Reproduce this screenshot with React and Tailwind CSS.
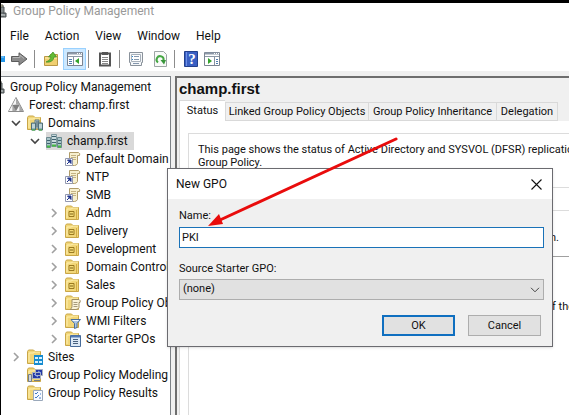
import React from "react";

const UI = "font-['Roboto','Noto_Sans',sans-serif]";

function FolderBase() {
  return (
    <>
      <path d="M.5 14.5V2.5L1.5 1h5l1.5 1.5h5.5v12z" fill="#f1d678" stroke="#c9a647" />
      <path d="M2 13V4h4l2-1h5" fill="none" stroke="#fff0b0" />
    </>
  );
}

function Buildings() {
  return (
    <g transform="translate(4 4)">
      <path d="M4 1h4v8H4z" fill="#b9cbd1" stroke="#607c86" />
      <path d="M5 3h3M5 5h3M5 7h3" stroke="#36535e" />
      <path d="M.5 4h4v7h-4zM7.500 4h4v7h-4z" fill="#91b0b8" stroke="#506f79" />
      <path d="M1 6h3M1 8h3M8 6h3M8 8h3" stroke="#e8f4f4" />
      <path d="M1 11h3M8 11h3" stroke="#43b53c" />
    </g>
  );
}

function TreeIcon({ type }) {
  return (
    <svg width="16" height="16" viewBox="0 0 16 16" className="shrink-0" aria-hidden="true">
      {type === "root" && (
        <>
          <path d="M4 2h8v7H4z" fill="#ddd6ad" stroke="#66655a" />
          <path d="M10 4h3v9h-3M5 10h10v4H5z" fill="#858b8c" stroke="#4d5355" />
          <path d="M9 12h5" stroke="#dfe5e6" />
        </>
      )}
      {type === "forest" && (
        <>
          <path d="M8 .5L15.500 14.500H.5z" fill="#c8c8c8" stroke="#8a8a8a" />
          <path d="M8 1v6l-3.500 1zM4.500 8v6L1 14zM11.500 8v6l-3.500 0z" fill="#f6f6f6" />
          <path d="M8 1l3.500 7L8 7.500zM4.500 8L8 14H4.500zM11.500 8L15 14h-3.500z" fill="#a9a9a9" />
          <path d="M4.500 8h7L8 14z" fill="#7e7e7e" />
        </>
      )}
      {type === "domains" && (
        <>
          <FolderBase />
          <Buildings />
        </>
      )}
      {type === "domain" && (
        <>
          <path d="M5.500 1.500h5v12h-5z" fill="#c9d9dc" stroke="#7f999f" />
          <path d="M.5 4.500h4v10h-4zM11.500 4.500h4v10h-4z" fill="#a9c5c9" stroke="#6d8b91" />
          <path d="M6 3.500h4M6 6.500h4M6 9.500h4M1 7.500h3M1 10.500h3M12 7.500h3M12 10.500h3" stroke="#3f6470" />
          <path d="M1 13.500h3M6 12.500h4M12 13.500h3" stroke="#47b944" strokeWidth="2" />
        </>
      )}
      {type === "link" && (
        <>
          <path d="M4.500 1.500h9q2 1 1 3h-2v8q-1 2-3 2H3q2-1 1.500-3z" fill="#f7f0cf" stroke="#b09c69" />
          <path d="M6 4.500h5M6 6.500h5M7 8.500h4" stroke="#c4b384" />
          <path d="M.5 7.500h7v7h-7z" fill="#fff" stroke="#9298b0" />
          <path d="M2 13l3-3M2.500 9h3.500v3.500z" fill="#20348d" stroke="#20348d" />
        </>
      )}
      {type === "ou" && (
        <>
          <FolderBase />
          <path d="M4 6.500h5v5H4z" fill="#f5db76" stroke="#9b7a21" />
          <path d="M5 9h3" stroke="#7d631b" />
          <path d="M11.500 5v9" stroke="#d3ad45" />
        </>
      )}
      {type === "objects" && (
        <>
          <FolderBase />
          <path d="M7 4.500h7q2 1 1 3h-1v5q-1 2-3 2H5q2-1 2-3z" fill="#faf3d8" stroke="#9e8e65" />
          <path d="M8.500 7.500h4M8.500 9.500h4M8.500 11.500h4" stroke="#a69b7d" />
        </>
      )}
      {type === "filter" && (
        <>
          <FolderBase />
          <path d="M6 6.500h9.500l-3.500 4v4l-2.500 1v-5z" fill="#a9c5e5" stroke="#486e9c" />
          <path d="M7.500 7.500h6" stroke="#f4f9ff" />
        </>
      )}
      {type === "starter" && (
        <>
          <FolderBase />
          <path d="M5.500 4.500h10v11h-10z" fill="#dce9f6" stroke="#476b99" />
          <path d="M6 5.500h9" stroke="#5179b4" strokeWidth="2" />
          <path d="M8 8.500h5M8 10.500h5M8 12.500h5" stroke="#48617e" />
        </>
      )}
      {type === "sites" && (
        <>
          <FolderBase />
          <path d="M7 6h9v10H7z" fill="#168bcf" />
          <path d="M8 8h3v2H8zM12 8h3v2h-3zM8 12h3v2H8zM12 12h3v2h-3z" fill="#d5f1ff" />
        </>
      )}
      {type === "modeling" && (
        <>
          <FolderBase />
          <path d="M8.500 2.500h7v6h-7zM5.500 5.500h8v6h-8z" fill="#263aa4" stroke="#a9b2c1" />
          <path d="M7 13.500h6M1.500 7.500h3v7h-3z" fill="#d0d5da" stroke="#737e8b" />
          <path d="M7 7l4 3M11 4l3 2" stroke="#85a5f5" />
        </>
      )}
      {type === "results" && (
        <>
          <FolderBase />
          <path d="M6.500 5.500h9v10h-9z" fill="#f7faff" stroke="#9aa8ba" />
          <path d="M8 8l1 1 2-2M8 12l1 1 3-3M13 9h1M12 13h2" fill="none" stroke="#427ac4" />
        </>
      )}
    </svg>
  );
}

function Expander({ state }) {
  return (
    <svg width="10" height="10" viewBox="0 0 10 10" className="shrink-0" aria-hidden="true">
      {state === "open" && <path d="M1 3l4 4 4-4" fill="none" stroke="#444" strokeWidth="1.6" />}
      {state === "closed" && <path d="M3 1l4 4-4 4" fill="none" stroke="#a0a0a0" strokeWidth="1.6" />}
    </svg>
  );
}

const tree = [
  ["Forest: champ.first", "forest", "pl-[7px]", "none"],
  ["Domains", "domains", "pl-[26px]", "open"],
  ["champ.first", "domain", "pl-[45px]", "open"],
  ["Default Domain", "link", "pl-[64px]", ""],
  ["NTP", "link", "pl-[64px]", ""],
  ["SMB", "link", "pl-[64px]", ""],
  ["Adm", "ou", "pl-[64px]", "closed"],
  ["Delivery", "ou", "pl-[64px]", "closed"],
  ["Development", "ou", "pl-[64px]", "closed"],
  ["Domain Controllers", "ou", "pl-[64px]", "closed"],
  ["Sales", "ou", "pl-[64px]", "closed"],
  ["Group Policy Objects", "objects", "pl-[64px]", "closed"],
  ["WMI Filters", "filter", "pl-[64px]", "closed"],
  ["Starter GPOs", "starter", "pl-[64px]", "closed"],
  ["Sites", "sites", "pl-[26px]", "closed"],
  ["Group Policy Modeling", "modeling", "pl-[26px]", ""],
  ["Group Policy Results", "results", "pl-[26px]", ""],
];

function TreeRow({ label, icon, indent, state }) {
  const selected = label === "champ.first";
  return (
    <li className={`flex h-[18px] items-center ${indent}`}>
      {state !== "none" && (
        <span className="-ml-4 w-4 shrink-0">
          <Expander state={state} />
        </span>
      )}
      <span className={`flex h-[18px] items-center gap-[5px] pr-1.5 ${selected ? "bg-[#d9d9d9]" : ""}`}>
        <TreeIcon type={icon} />
        {label}
      </span>
    </li>
  );
}

function Separator() {
  return <span className="h-[18px] w-px shrink-0 bg-[#8c8c8c]" />;
}

function ToolButton({ label, children, className = "" }) {
  return (
    <button type="button" aria-label={label} className={`flex h-[22px] shrink-0 items-center justify-center ${className}`}>
      {children}
    </button>
  );
}

function PaneIcon({ flipped }) {
  return (
    <svg width="16" height="14" viewBox="0 0 16 14" aria-hidden="true">
      <path d="M.5.5h15v13H.5z" fill="#fff" stroke="#7b8491" />
      <path d="M1 1.500h14" stroke="#8d99a8" strokeWidth="2" />
      <path d="M10 1.500h1M12 1.500h1M14 1.500h1" stroke="#fff" />
      <path d="M1 4.500h14" stroke="#8c98a6" />
      {flipped ? (
        <>
          <path d="M10.500 5v8" stroke="#8792a1" />
          <path d="M4 6l4 3-4 3z" fill="#34a32c" />
          <path d="M12 7.500h2M12 9.500h2M12 11.500h2" stroke="#4f7daf" />
        </>
      ) : (
        <>
          <path d="M6.500 5v8" stroke="#8792a1" />
          <path d="M12 6L8 9l4 3z" fill="#34a32c" />
          <path d="M2 7.500h3M2 9.500h3M2 11.500h3" stroke="#4f7daf" />
        </>
      )}
    </svg>
  );
}

function Toolbar() {
  return (
    <div className="flex h-6 items-center overflow-hidden pb-px">
      <ToolButton label="Back" className="w-1">
        <svg width="4" height="8" viewBox="0 0 4 8"><path d="M0 1h4v6H0z" fill="#2496e8" /><path d="M0 2h3" stroke="#93d1ff" /></svg>
      </ToolButton>
      <ToolButton label="Forward" className="mr-1.5 ml-1.5 w-[17px]">
        <svg width="17" height="14" viewBox="0 0 17 14">
          <path d="M.5 4.500H8V.8L16 7l-8 6.200V9.500H.5z" fill="#8b8b8b" stroke="#5c5c5c" />
          <path d="M2 5.500h7V3l4 3.500" fill="none" stroke="#b5b5b5" />
        </svg>
      </ToolButton>
      <Separator />
      <ToolButton label="Up one level" className="mr-1 ml-2 w-4">
        <svg width="16" height="16" viewBox="0 0 16 16">
          <path d="M1.500 14.500v-9h5l1-2h7v11z" fill="#f0cf70" stroke="#b99745" />
          <path d="M2 7h12" stroke="#fff0b0" />
          <path d="M3 11q4-1 5-5H5.500l4.500-5 3.500 5H11q-1 6-8 5z" fill="#62bb35" stroke="#398b23" strokeWidth=".7" />
        </svg>
      </ToolButton>
      <ToolButton label="Show console tree" className="mr-0.5 w-[23px] border border-[#99d1ff] bg-[#cce8ff]">
        <PaneIcon />
      </ToolButton>
      <Separator />
      <ToolButton label="Delete" className="mr-1.5 ml-2 w-4">
        <svg width="14" height="16" viewBox="0 0 14 16">
          <path d="M2 2.500h10v12H2z" fill="#fff" stroke="#555" strokeWidth="2" />
          <path d="M4 1h6v3H4z" fill="#555" />
          <path d="M4 6.500h6M4 8.500h6M4 10.500h6M4 12.500h6" stroke="#888" />
        </svg>
      </ToolButton>
      <Separator />
      <ToolButton label="Properties" className="ml-2 w-4">
        <svg width="16" height="16" viewBox="0 0 16 16">
          <path d="M1.500 1.500h13v10h-1v3h-11v-3h-1z" fill="#f5f7f9" stroke="#8a929b" />
          <path d="M3.500 3.500h9v7h-9z" fill="#fff" stroke="#a7b0ba" />
          <path d="M6 5.500h5M6 8.500h5M5 12.500h6" stroke="#8497ad" />
          <path d="M4 5.500h1M4 8.500h1" stroke="#2787cf" />
        </svg>
      </ToolButton>
      <ToolButton label="Refresh" className="mr-1.5 ml-2 w-4">
        <svg width="15" height="16" viewBox="0 0 15 16">
          <path d="M1.500.5h9l3 3v12h-12z" fill="#f9faf9" stroke="#9da5a5" />
          <path d="M5 11.500a3.500 3.500 0 1 1 5.500-2" fill="none" stroke="#45a743" strokeWidth="2" />
          <path d="M7.500 9h5.500l-2 4.500z" fill="#38963a" />
        </svg>
      </ToolButton>
      <Separator />
      <ToolButton label="Help" className="ml-2 w-4">
        <svg width="14" height="16" viewBox="0 0 14 16">
          <path d="M.5.5h13v15H.5z" fill="#395fc3" stroke="#23408c" />
          <path d="M2.500 1v14" stroke="#6f91e6" />
          <text x="8" y="13" textAnchor="middle" fontFamily="Liberation Serif, serif" fontWeight="700" fontSize="15" fill="#fff">?</text>
        </svg>
      </ToolButton>
      <ToolButton label="Show action pane" className="ml-1 w-[18px]">
        <PaneIcon flipped />
      </ToolButton>
    </div>
  );
}

const menus = ["File", "Action", "View", "Window", "Help"];

function Dialog() {
  return (
    <form
      role="dialog"
      aria-label="New GPO"
      onSubmit={(e) => e.preventDefault()}
      className="absolute top-[165px] left-[166px] w-[386px] border border-[#6b6b70] bg-[#f0f0f0] text-[11px] shadow-sm"
    >
      <header className="flex h-[30px] items-center justify-between bg-white pr-2.5 pl-2 text-[12px]">
        <h2>New GPO</h2>
        <button type="button" aria-label="Close">
          <svg width="11" height="11" viewBox="0 0 11 11"><path d="M.5.5l10 10M10.500.5l-10 10" stroke="#111" strokeWidth="1.1" /></svg>
        </button>
      </header>
      <div className="flex flex-col pt-2.5 pr-2 pb-2.5 pl-[11px]">
        <label htmlFor="gpo-name" className="h-[18px] leading-[14px]">Name:</label>
        <input id="gpo-name" defaultValue="PKI" className="h-[21px] w-full border border-[#1a72b8] bg-white px-0.5 outline-none" />
        <label htmlFor="starter" className="mt-3.5 h-[17px] leading-[14px]">Source Starter GPO:</label>
        <div className="relative">
          <select id="starter" className="block h-[21px] w-full appearance-none border border-[#adadad] bg-[#e1e1e1] px-[3px] outline-none">
            <option>(none)</option>
          </select>
          <svg width="10" height="6" viewBox="0 0 10 6" className="pointer-events-none absolute top-2 right-1"><path d="M1 .8l4 4 4-4" fill="none" stroke="#444" /></svg>
        </div>
        <div className="mt-[15px] flex justify-end gap-[13px] pr-[3px]">
          <button type="submit" className="h-[21px] w-[73px] border-2 border-[#0f6fc0] bg-[#e1e1e1] leading-4">OK</button>
          <button type="button" className="h-[21px] w-[73px] border border-[#adadad] bg-[#e1e1e1] leading-4">Cancel</button>
        </div>
      </div>
    </form>
  );
}

function Details() {
  return (
    <main className="flex min-w-0 flex-1 flex-col overflow-hidden border-t-2 border-l-2 border-[#6e6e6e] bg-[#f0f0f0] pl-0.5">
      <h1 className="h-[22px] font-['Liberation_Sans',Arial,sans-serif] text-[15px] leading-[22px] font-bold">champ.first</h1>
      <div role="tablist" className="flex h-[21px] items-end text-[11px] whitespace-nowrap">
        <button type="button" role="tab" aria-selected="true" className="h-[21px] w-[46px] border-t border-l border-[#d9d9d9] bg-white text-center leading-[18px]">Status</button>
        <button type="button" role="tab" className="h-[19px] w-[144px] border border-[#d9d9d9] text-center leading-[18px]">Linked Group Policy Objects</button>
        <button type="button" role="tab" className="h-[19px] w-[128px] border-y border-r border-[#d9d9d9] text-center leading-[18px]">Group Policy Inheritance</button>
        <button type="button" role="tab" className="h-[19px] w-[61px] border-y border-r border-[#d9d9d9] text-center leading-[18px]">Delegation</button>
      </div>
      <div className="flex-1 border-l border-[#d9d9d9] bg-white pt-3 pl-2 text-[11px] leading-[13px]">
        <div className="flex h-full flex-col border-t border-l border-[#dcdcdc] whitespace-nowrap">
          <p className="h-[53px] pt-[9px] pl-[9px]">
            This page shows the status of Active Directory and SYSVOL (DFSR) replication
            <br />
            Group Policy.
          </p>
          <div className="h-6 border-y border-[#dcdcdc]" />
          <p className="h-[46px] border-b border-[#a0a0a0] pt-5 pl-[361px]">n.</p>
          <p className="pt-[43px] pl-[363px]">f the</p>
        </div>
      </div>
    </main>
  );
}

export default function App() {
  return (
    <div className={`relative flex h-screen flex-col overflow-hidden border-t-3 border-l border-black bg-white text-[12px] text-[#111] ${UI}`}>
      <header className="flex h-[15px] items-center gap-1 overflow-hidden leading-3 text-[#999]">
        <span className="-ml-2.5"><TreeIcon type="root" /></span>
        <span className="pl-0.5">Group Policy Management</span>
      </header>
      <nav className="flex h-[29px] items-center gap-4 pt-1.5 pl-[9px]">
        {menus.map((m) => (
          <button type="button" key={m}>{m}</button>
        ))}
      </nav>
      <Toolbar />
      <div className="flex min-h-0 flex-1 bg-[#f0f0f0] pt-[5px]">
        <aside className="w-[170px] shrink-0 overflow-hidden border-t border-r border-[#7d8287] bg-white whitespace-nowrap">
          <div className="flex h-[19px] items-center gap-[5px]">
            <span className="-ml-3"><TreeIcon type="root" /></span>
            <span>Group Policy Management</span>
          </div>
          <ul>
            {tree.map(([label, icon, indent, state]) => (
              <TreeRow key={label} label={label} icon={icon} indent={indent} state={state} />
            ))}
          </ul>
        </aside>
        <div className="w-1 shrink-0" />
        <Details />
      </div>
      <Dialog />
      <svg width="190" height="90" viewBox="0 0 190 90" className="pointer-events-none absolute top-[134px] left-[207px]" aria-hidden="true">
        <path d="M188 2L12 83" stroke="#e90c0c" strokeWidth="3" strokeLinecap="round" />
        <path d="M0 89l11-12 4 10z" fill="#e90c0c" />
      </svg>
    </div>
  );
}
